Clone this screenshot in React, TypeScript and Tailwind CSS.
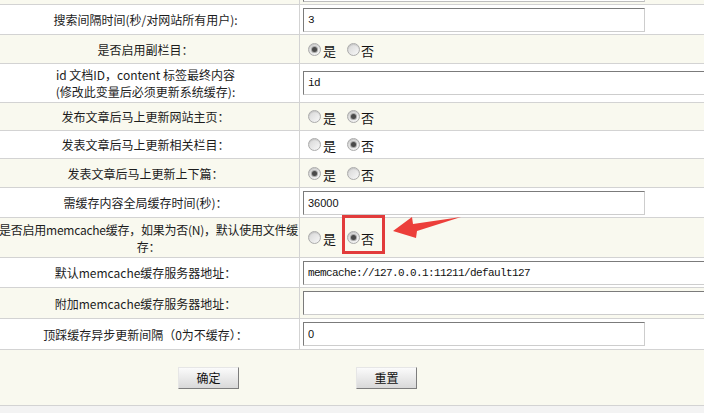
import React from 'react';

const Radio = ({ checked }: { checked?: boolean }) => (
  <span className="inline-flex h-[13px] w-[13px] shrink-0 items-center justify-center rounded-full border border-[#ababab] bg-linear-to-br from-[#d6d6d6] to-[#f8f8f8] shadow-[inset_0_1px_1px_rgba(0,0,0,0.12)]">
    {checked && <span className="h-[5px] w-[5px] rounded-full bg-[#4a4a4a] shadow-[0_0_0_1px_#a8a8a8]" />}
  </span>
);

const YesNo = ({ yes }: { yes: boolean }) => (
  <div className="flex items-center pl-[5px] text-[13px] text-[#111]">
    <Radio checked={yes} />
    <span className="ml-[2px] mt-[3px]">是</span>
    <span className="ml-[11px]" />
    <Radio checked={!yes} />
    <span className="ml-[1px] mt-[3px]">否</span>
  </div>
);

const TextBox = ({ value, wide, mono }: { value: string; wide?: boolean; mono?: boolean }) => (
  <input
    readOnly
    value={value}
    className={`h-[24px] shrink-0 border border-t-[#7b7b7b] border-l-[#7b7b7b] border-r-[#cdcdcd] border-b-[#cdcdcd] bg-white px-[4px] text-[#111] outline-none ${
      wide ? 'w-[430px]' : 'w-[342px]'
    } ${mono ? "font-['Liberation_Mono',monospace] text-[11px] tracking-[-0.6px]" : "font-['Liberation_Sans',sans-serif] text-[11px]"}`}
  />
);

const Row = ({
  h,
  cream,
  label,
  children,
}: {
  h: string;
  cream?: boolean;
  label: React.ReactNode;
  children?: React.ReactNode;
}) => (
  <div className={`flex shrink-0 border-b border-[#d3d3d3] ${h} ${cream ? 'bg-[#f9f9ef]' : 'bg-white'}`}>
    <div className="flex w-[300px] shrink-0 items-center justify-center whitespace-nowrap border-r border-[#d3d3d3] pr-[8px] text-center text-[12px] leading-[17px] text-[#1c1c1c]">
      {label}
    </div>
    <div className="flex flex-1 items-center pl-[3px]">{children}</div>
  </div>
);

const Btn = ({ text }: { text: string }) => (
  <button className="h-[22px] w-[61px] border border-t-[#e6e6e6] border-l-[#e6e6e6] border-r-[#7d7d7d] border-b-[#7d7d7d] bg-linear-to-b from-[#fbfbfb] to-[#d9d9d9] text-[12px] text-[#111]">
    {text}
  </button>
);

export default function App() {
  return (
    <div className="relative flex h-[413px] w-[704px] flex-col overflow-hidden bg-white font-['Noto_Sans_CJK_SC',sans-serif]">
      {/* cut-off row above */}
      <div className="flex h-[5px] shrink-0 border-b border-[#d3d3d3] bg-[#f9f9ef]">
        <div className="w-[300px] shrink-0 border-r border-[#d3d3d3]" />
        <div className="pl-[3px]">
          <div className="h-[2px] w-[342px] border border-t-0 border-l-[#7b7b7b] border-r-[#cdcdcd] border-b-[#bdbdbd] bg-white" />
        </div>
      </div>

      <Row h="h-[30px]" label="搜索间隔时间(秒/对网站所有用户):">
        <TextBox value="3" mono />
      </Row>
      <Row h="h-[29px]" cream label="是否启用副栏目：">
        <YesNo yes />
      </Row>
      <Row
        h="h-[39px]"
        label={
          <span>
            id 文档ID，content 标签最终内容
            <br />
            (修改此变量后必须更新系统缓存):
          </span>
        }
      >
        <TextBox value="id" wide mono />
      </Row>
      <Row h="h-[28px]" cream label="发布文章后马上更新网站主页：">
        <YesNo yes={false} />
      </Row>
      <Row h="h-[28px]" label="发表文章后马上更新相关栏目：">
        <YesNo yes={false} />
      </Row>
      <Row h="h-[29px]" cream label="发表文章后马上更新上下篇：">
        <YesNo yes />
      </Row>
      <Row h="h-[30px]" label="需缓存内容全局缓存时间(秒)：">
        <TextBox value="36000" />
      </Row>
      <Row
        h="h-[40px]"
        cream
        label={
          <span className="-mr-[6px] tracking-[-0.25px]">
            是否启用memcache缓存，如果为否(N)，默认使用文件缓
            <br />
            存：
          </span>
        }
      >
        <YesNo yes={false} />
      </Row>
      <Row h="h-[30px]" label="默认memcache缓存服务器地址：">
        <TextBox value="memcache://127.0.0.1:11211/default127" wide mono />
      </Row>
      <Row h="h-[31px]" cream label="附加memcache缓存服务器地址：">
        <TextBox value="" wide />
      </Row>
      <Row h="h-[31px]" label="顶踩缓存异步更新间隔（0为不缓存）：">
        <TextBox value="0" />
      </Row>

      <div className="flex h-[55px] shrink-0 items-center gap-[117px] bg-[#f9f9ef] pl-[178px]">
        <Btn text="确定" />
        <Btn text="重置" />
      </div>
      <div className="flex-1 border-t border-[#d3d3d3] bg-[#f3f3f3]" />

      {/* annotation */}
      <div className="absolute left-[342px] top-[215px] h-[39px] w-[43px] border-[3px] border-[#e23b3b]" />
      <svg className="pointer-events-none absolute left-0 top-0" width="704" height="413" viewBox="0 0 704 413">
        <polygon points="393,231 412,217 413,224 461,217 417,231 416,238" fill="#ec3f3a" />
      </svg>
    </div>
  );
}
